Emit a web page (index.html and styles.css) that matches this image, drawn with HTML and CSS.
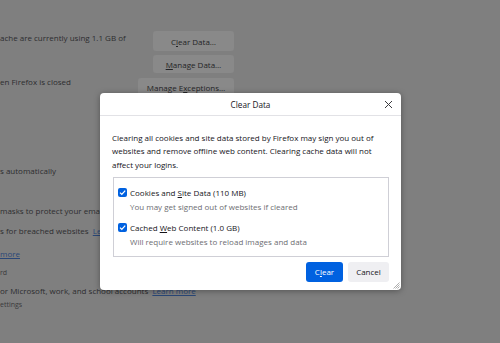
FILE: index.html
```html
<!DOCTYPE html>
<html>
<head>
<meta charset="utf-8">
<link rel="stylesheet" href="styles.css">
</head>
<body>
<div class="page">
  <div class="row r1">
    <span class="txt">ache are currently using 1.1 GB of</span>
    <span class="pbtn b1">C<u>l</u>ear Data…</span>
  </div>
  <div class="row r2">
    <span class="pbtn b2"><u>M</u>anage Data…</span>
  </div>
  <div class="row r3">
    <span class="txt up">en Firefox is closed</span>
    <span class="pbtn b3">Manage E<u>x</u>ceptions…</span>
  </div>
  <div class="line l1">s automatically</div>
  <div class="line l2">masks to protect your email</div>
  <div class="line l3">s for breached websites&nbsp; <span class="plink">Learn more</span></div>
  <div class="line l4"><span class="plink">more</span></div>
  <div class="line small l5">rd</div>
  <div class="line l6">or Microsoft, work, and school accounts&nbsp; <span class="plink">Learn more</span></div>
  <div class="line small l7">ettings</div>
</div>

<div class="dialog">
  <div class="dlg-head">
    <span class="dlg-title">Clear Data</span>
    <svg class="close" width="9" height="9" viewBox="0 0 9 9"><path d="M1 1L8 8M8 1L1 8" stroke="#3a3a3e" stroke-width="1" fill="none"/></svg>
  </div>
  <div class="dlg-body">
    <p class="desc">Clearing all cookies and site data stored by Firefox may sign you out of websites and remove offline web content. Clearing cache data will not affect your logins.</p>
    <div class="box">
      <div class="item">
        <span class="cb"><svg width="9" height="9" viewBox="0 0 9 9"><path d="M2 4.6L3.8 6.4L7.2 2.6" stroke="#fff" stroke-width="1.3" fill="none"/></svg></span>
        <span class="label">Cookies and <u>S</u>ite Data (110 MB)</span>
      </div>
      <div class="sub">You may get signed out of websites if cleared</div>
      <div class="item second">
        <span class="cb"><svg width="9" height="9" viewBox="0 0 9 9"><path d="M2 4.6L3.8 6.4L7.2 2.6" stroke="#fff" stroke-width="1.3" fill="none"/></svg></span>
        <span class="label">Cached <u>W</u>eb Content (1.0 GB)</span>
      </div>
      <div class="sub">Will require websites to reload images and data</div>
    </div>
    <div class="actions">
      <span class="btn primary">C<u>l</u>ear</span>
      <span class="btn secondary">Cancel</span>
    </div>
  </div>
  <svg class="grip" width="8" height="8" viewBox="0 0 8 8"><path d="M7.5 1.5L1.5 7.5M7.5 3.5L3.5 7.5M7.5 5.5L5.5 7.5" stroke="#9a9a9a" stroke-width="0.8"/></svg>
</div>
</body>
</html>
```

FILE: styles.css
```css
html, body {
  margin: 0;
  padding: 0;
}
body {
  width: 500px;
  height: 343px;
  overflow: hidden;
  background: #7f7f7f;
  font-family: "Open Sans", "Noto Sans", sans-serif;
  font-size: 8px;
  color: #2d2d2f;
  position: relative;
}
u { text-decoration: underline; text-underline-offset: 1px; }

.page {
  width: 234px;
  display: flex;
  flex-direction: column;
}
.row {
  display: flex;
  justify-content: space-between;
  align-items: flex-start;
}
.r1 { margin-top: 31px; height: 20px; }
.r2 { margin-top: 4px; height: 18px; justify-content: flex-end; }
.r3 { margin-top: 5px; height: 19px; }
.txt { line-height: 13px; }
.up { margin-top: -3px; }
.pbtn {
  background: #898989;
  border-radius: 3px;
  display: flex;
  align-items: center;
  justify-content: center;
  height: 100%;
  color: #242426;
}
.b1 { width: 81px; }
.b2 { width: 81px; }
.b3 { width: 96px; }

.line { line-height: 13px; white-space: nowrap; }
.small { font-size: 7px; color: #3a3a3c; }
.l1 { margin-top: 67px; }
.l2 { margin-top: 27px; }
.l3 { margin-top: 7px; }
.l4 { margin-top: 10px; }
.l5 { margin-top: 6px; }
.l6 { margin-top: 5px; }
.l7 { margin-top: 1px; }
.plink { color: #2a4778; text-decoration: underline; }

.dialog {
  position: absolute;
  left: 100px;
  top: 93px;
  width: 301px;
  height: 197px;
  background: #fff;
  border-radius: 4px;
  box-shadow: 0 1px 6px rgba(0, 0, 0, 0.35);
  color: #15141a;
}
.dlg-head {
  height: 22px;
  border-bottom: 1px solid #e2e2e6;
  display: flex;
  align-items: center;
  justify-content: center;
  position: relative;
}
.dlg-title { font-size: 8.2px; }
.close {
  position: absolute;
  right: 8px;
  top: 7px;
}
.dlg-body {
  padding: 15px 12px 0 12px;
}
.desc {
  margin: 0 0 6px 0;
  line-height: 13.3px;
  padding-right: 10px;
}
.box {
  border: 1px solid #cfcfd6;
  margin-left: 1px;
  padding: 8px 4px 7px 4px;
  display: flex;
  flex-direction: column;
}
.item {
  display: flex;
  align-items: center;
  gap: 3px;
  line-height: 14px;
}
.item.second { margin-top: 7px; }
.cb {
  width: 9px;
  height: 9px;
  border-radius: 2px;
  background: #0061e0;
  display: flex;
}
.sub {
  line-height: 14px;
  padding-left: 12px;
  color: #6d6d72;
}
.actions {
  display: flex;
  justify-content: flex-end;
  gap: 5px;
  margin-top: 5px;
}
.btn {
  height: 20px;
  border-radius: 3px;
  display: flex;
  align-items: center;
  justify-content: center;
}
.primary { width: 37px; background: #0061e0; color: #fff; }
.secondary { width: 41px; background: #efeff2; color: #15141a; }
.grip {
  position: absolute;
  right: 1px;
  bottom: 1px;
}
```
